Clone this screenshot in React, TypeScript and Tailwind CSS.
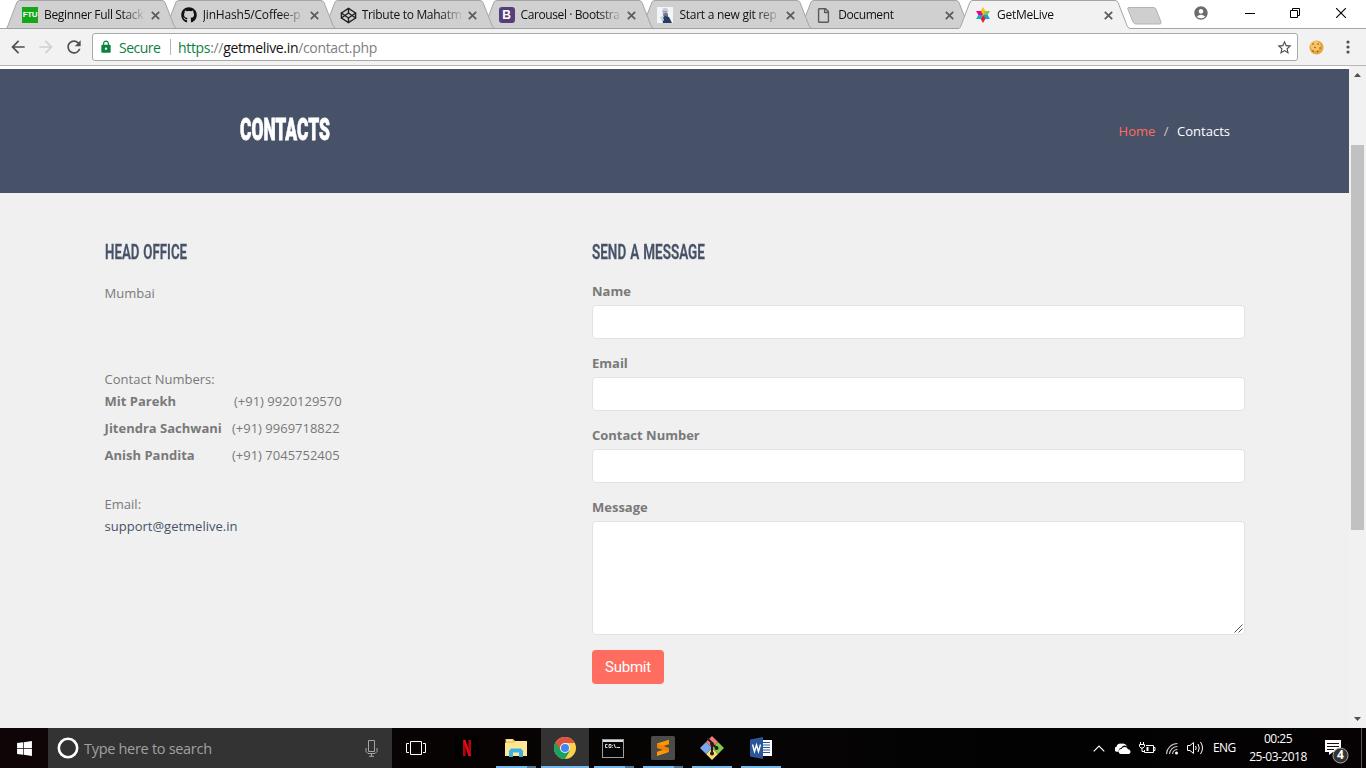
import type { ReactNode } from "react";
import { FaGithub, FaRegFile, FaWindows } from "react-icons/fa";
import { FiCodepen } from "react-icons/fi";
import { MdAccountCircle, MdArrowBack, MdArrowForward, MdLock, MdRefresh, MdStarBorder } from "react-icons/md";

function FlowerIcon() {
  const colors = ["#ffc20e", "#8cc63f", "#1b9dd9", "#ed1c24", "#17b3b5", "#ec008c"];
  return (
    <svg width="16" height="16" viewBox="0 0 16 16">
      {colors.map((c, i) => (
        <path key={c} d="M8 8 L5.5 4.3 L8 0 L10.5 4.3 Z" fill={c} transform={`rotate(${i * 60} 8 8)`} />
      ))}
    </svg>
  );
}

function PortraitIcon() {
  return (
    <svg width="16" height="16" viewBox="0 0 16 16">
      <rect width="16" height="16" fill="#f3f5f7" />
      <path d="M5 4 Q6 0 9 1 Q12 2 11 6 L10 9 H6 Z" fill="#c9cdd3" />
      <path d="M6 4h4v1.500H6z" fill="#8e98a8" />
      <path d="M6 7 Q9 5 11 7 L11 11 H7 Z" fill="#65758f" />
      <path d="M5 11 L8 9 L12 10 L15 16 H6 Z" fill="#263d63" />
      <path d="M3 10 L6 9 L7 14 L4 13 Z" fill="#c7d4e5" />
    </svg>
  );
}

function CloseX() {
  return (
    <svg width="9" height="9" viewBox="0 0 9 9" className="shrink-0">
      <path d="M.8 .8 L8.200 8.200 M8.200 .8 L.8 8.200" stroke="#5a5a5a" strokeWidth="1.700" />
    </svg>
  );
}

type TabInfo = { title: string; icon: ReactNode; text: string; z: string };

const tabs: TabInfo[] = [
  {
    title: "Beginner Full Stack",
    icon: (
      <span className="flex size-4 items-center justify-center bg-[#12a818] font-['Liberation_Sans'] text-[8px] leading-none font-bold tracking-[-0.4px] text-white">
        FTU
      </span>
    ),
    text: "tracking-[-0.35px]",
    z: "z-[6]",
  },
  { title: "JinHash5/Coffee-p", icon: <FaGithub size={16} color="#111" />, text: "tracking-[-0.2px]", z: "z-[5]" },
  { title: "Tribute to Mahatm", icon: <FiCodepen size={17} color="#222" />, text: "tracking-[-0.3px]", z: "z-[4]" },
  {
    title: "Carousel · Bootstra",
    icon: (
      <span className="flex size-4 items-center justify-center rounded-[3px] bg-[#563d7c] font-['Liberation_Sans'] text-[12px] leading-none font-bold text-white">
        B
      </span>
    ),
    text: "tracking-[-0.4px]",
    z: "z-[3]",
  },
  { title: "Start a new git rep", icon: <PortraitIcon />, text: "tracking-[-0.25px]", z: "z-[2]" },
  { title: "Document", icon: <FaRegFile size={15} color="#5a5a5a" />, text: "tracking-[-0.4px]", z: "z-[1]" },
  { title: "GetMeLive", icon: <FlowerIcon />, text: "tracking-[-0.3px]", z: "z-[10]" },
];

function Tab({ tab, active }: { tab: TabInfo; active: boolean }) {
  return (
    <div className={`relative mr-[-12.170px] h-[29px] w-[171px] shrink-0 ${tab.z}`}>
      <svg className="absolute inset-0" width="171" height="29" viewBox="0 0 171 29">
        <path
          d="M0 28.500 Q1 28 2 25.500 L11 2 Q12 .5 14 .5 H156 Q158 .5 159 2.500 L168 25.500 Q169 28 171 28.500 V29 H0 Z"
          fill={active ? "#f2f2f2" : "#d0d0d0"}
        />
        <path
          d="M0 28.500 Q1 28 2 25.500 L11 2 Q12 .5 14 .5 H156 Q158 .5 159 2.500 L168 25.500 Q169 28 171 28.500"
          fill="none"
          stroke="#a5a5a5"
        />
        {!active && <path d="M0 28.500H171" stroke="#a0a0a0" />}
      </svg>
      <div className="relative flex h-[29px] items-center pt-px pl-4">
        <span className="flex w-[22px] shrink-0 items-center">{tab.icon}</span>
        <span
          className={`w-[102px] overflow-hidden font-['Open_Sans',sans-serif] text-[12px] whitespace-nowrap text-[#111] [mask-image:linear-gradient(to_right,#000_78px,transparent_102px)] ${tab.text}`}
        >
          {tab.title}
        </span>
        <span className="ml-[4.800px]">
          <CloseX />
        </span>
      </div>
    </div>
  );
}

function TabStrip() {
  return (
    <div className="relative flex h-[29px] shrink-0 bg-white pl-[6px]">
      <div className="absolute inset-x-0 bottom-0 h-px bg-[#a5a5a5]" />
      {tabs.map((t, i) => (
        <Tab key={t.title} tab={t} active={i === 6} />
      ))}
      <svg className="relative mt-[7px] ml-[9px] shrink-0" width="35" height="18" viewBox="0 0 35 18">
        <path d="M2 .5 H26 Q28 .5 29 2 L34 15 Q34.500 17 33 17 H9 Q7 17 6 15 L.8 2 Q.5 .5 2 .5Z" fill="#cfcfcf" stroke="#b3b3b3" />
      </svg>
      <div className="ml-auto flex items-start pr-[20px]">
        <MdAccountCircle className="mt-[5px]" size={16} color="#6b6b6b" />
        <svg className="mt-2 ml-9" width="10" height="10" viewBox="0 0 10 10">
          <path d="M0 5.500H10" stroke="#000" />
        </svg>
        <svg className="mt-2 ml-[35px]" width="10" height="10" viewBox="0 0 10 10">
          <path d="M.5 2.500H7.500V9.500H.5ZM2.500 2.500V.5H9.500V7.500H7.500" fill="none" stroke="#000" />
        </svg>
        <svg className="mt-2 ml-[36px]" width="10" height="10" viewBox="0 0 10 10">
          <path d="M0 0L10 10M10 0L0 10" stroke="#000" strokeWidth="1.100" />
        </svg>
      </div>
    </div>
  );
}

function Toolbar() {
  return (
    <div className="flex h-[37px] shrink-0 items-center border-b border-[#b6b6b6] bg-[#f2f2f2] pl-2">
      <MdArrowBack size={20} color="#505050" />
      <MdArrowForward className="ml-2" size={20} color="#d0d0d0" />
      <MdRefresh className="ml-2" size={20} color="#505050" />
      <div className="ml-2 flex h-[28px] w-[1206px] items-center rounded-[3px] border border-[#a9a9a9] bg-white pl-[6px] font-['Open_Sans',sans-serif] text-[14px]">
        <MdLock size={14} color="#0b8043" />
        <span className="ml-1.5 w-[44px] tracking-[-0.5px] whitespace-nowrap text-[#0b8043]">Secure</span>
        <span className="ml-[7px] h-4 w-px bg-[#b5b5b5]" />
        <span className="ml-[7px] tracking-[-0.33px] whitespace-nowrap text-[#808080]">
          <span className="text-[#0b8043]">https</span>://<span className="text-[#111]">getmelive.in</span>/contact.php
        </span>
        <MdStarBorder className="mr-1 ml-auto" size={17} color="#505050" />
      </div>
      <svg className="ml-[11px]" width="15" height="15" viewBox="0 0 15 15">
        <circle cx="7.500" cy="7.500" r="7" fill="#e9a43f" />
        <circle cx="6.500" cy="6" r="5" fill="#f6c566" />
        {[[4, 4], [9, 4], [6, 7.500], [11, 8], [4, 11], [8.500, 11.500]].map(([x, y]) => (
          <circle key={`${x}-${y}`} cx={x} cy={y} r=".8" fill="#8a4a1c" />
        ))}
      </svg>
      <svg className="ml-[22px]" width="4" height="14" viewBox="0 0 4 14">
        <circle cx="2" cy="2" r="1.600" fill="#505050" />
        <circle cx="2" cy="7" r="1.600" fill="#505050" />
        <circle cx="2" cy="12" r="1.600" fill="#505050" />
      </svg>
    </div>
  );
}

const contacts = [
  { name: "Mit Parekh", phone: "(+91) 9920129570", col: "w-[129.400px]" },
  { name: "Jitendra Sachwani", phone: "(+91) 9969718822", col: "w-[127.400px]" },
  { name: "Anish Pandita", phone: "(+91) 7045752405", col: "w-[127.400px]" },
];

function Heading({ children, scale }: { children: ReactNode; scale: string }) {
  return (
    <h2
      className={`h-[22px] origin-left font-[Roboto,sans-serif] text-[21px] leading-[22px] font-semibold whitespace-nowrap text-[#475269] [-webkit-text-stroke:0.3px_#475269] [word-spacing:1px] ${scale}`}
    >
      {children}
    </h2>
  );
}

function ContactPage() {
  return (
    <div className="flex min-w-0 flex-1 flex-col bg-[#f0f0f0] font-['Open_Sans',sans-serif] text-[13px] leading-[22px] text-[#797979]">
      <div className="h-[3px] bg-white" />
      <header className="flex h-[124px] shrink-0 items-center justify-between bg-[#475269] pr-[119px] pl-[240px]">
        <h1 className="mb-[3px] w-[92px] origin-left scale-x-[0.570] font-[Roboto,sans-serif] text-[30.500px] leading-[34px] font-black whitespace-nowrap text-white [-webkit-text-stroke:0.8px_white]">
          CONTACTS
        </h1>
        <nav className="flex text-white">
          <span className="text-[#ff6c60]">Home</span>
          <span className="mx-[8.500px] text-[#ccc]">/</span>
          <span>Contacts</span>
        </nav>
      </header>
      <main className="flex pt-12 pl-[104.600px]">
        <section className="w-[487.400px]">
          <Heading scale="w-[125px] scale-x-[0.632]">HEAD OFFICE</Heading>
          <p className="mt-[19px]">Mumbai</p>
          <div className="mt-16">Contact Numbers:</div>
          <ul className="flex flex-col gap-[5px]">
            {contacts.map((c) => (
              <li key={c.name} className="flex">
                <strong className={`${c.col} font-bold whitespace-nowrap`}>{c.name}</strong>
                <span>{c.phone}</span>
              </li>
            ))}
          </ul>
          <div className="mt-[27px]">Email:</div>
          <a className="text-[#475269]">support@getmelive.in</a>
        </section>
        <form className="w-[653px]">
          <Heading scale="w-[170px] scale-x-[0.643]">SEND A MESSAGE</Heading>
          <div className="mt-[17px] flex flex-col gap-[13px]">
            {["Name", "Email", "Contact Number"].map((label) => (
              <label key={label} className="flex flex-col gap-[3px] font-bold">
                {label}
                <input className="h-[34px] rounded border border-[#e2e2e4] bg-white" />
              </label>
            ))}
            <label className="flex flex-col gap-[3px] font-bold">
              Message
              <span className="flex h-[114px] items-end justify-end rounded border border-[#e2e2e4] bg-white p-px">
                <svg width="9" height="9" viewBox="0 0 9 9">
                  <path d="M.5 8.500L8.500 .5M4.500 8.500L8.500 4.500" stroke="#555" strokeWidth="1" />
                </svg>
              </span>
            </label>
          </div>
          <button
            type="button"
            className="mt-[15px] block h-[34px] w-[72px] rounded bg-[#ff6c60] font-[Roboto,sans-serif] text-[15px] leading-[34px] tracking-[-0.2px] text-white"
          >
            Submit
          </button>
        </form>
      </main>
    </div>
  );
}

function Scrollbar() {
  return (
    <div className="flex w-[17px] shrink-0 flex-col items-center bg-[#f1f1f1] pt-[7px]">
      <svg width="7" height="4" viewBox="0 0 7 4">
        <path d="M0 4L3.500 0L7 4Z" fill="#505050" />
      </svg>
      <div className="mt-[68px] h-[385px] w-[13px] bg-[#c1c1c1]" />
      <svg className="mt-auto mb-[7px]" width="7" height="4" viewBox="0 0 7 4">
        <path d="M0 0L3.500 4L7 0Z" fill="#505050" />
      </svg>
    </div>
  );
}

function TaskApp({ children, bar }: { children: ReactNode; bar?: "full" | "wide" | "split" }) {
  return (
    <div className={`flex h-10 w-12 flex-col items-center ${bar === "full" ? "bg-[#333]" : ""}`}>
      <div className="flex h-[38px] items-center pt-[2px]">{children}</div>
      {bar === "full" && <div className="h-[2px] w-12 bg-[#76b9ed]" />}
      {bar === "wide" && <div className="h-[2px] w-10 bg-[#76b9ed]" />}
      {bar === "split" && (
        <div className="flex h-[2px] w-10">
          <div className="w-[31px] bg-[#76b9ed]" />
          <div className="w-[9px] bg-[#4c789b]" />
        </div>
      )}
    </div>
  );
}

function Taskbar() {
  return (
    <footer className="flex h-10 shrink-0 bg-[linear-gradient(90deg,#100506,#070303_35%,#060404_60%,#020202_75%,#060203)] font-['Open_Sans',sans-serif] text-white">
      <div className="flex w-12 items-center justify-center">
        <FaWindows size={17} />
      </div>
      <div className="flex w-[344px] items-center bg-[#333] pr-[14px] pl-[9px]">
        <svg width="22" height="22" viewBox="0 0 22 22">
          <circle cx="11" cy="11" r="9.200" fill="none" stroke="#fff" strokeWidth="2.600" />
        </svg>
        <span className="ml-[5px] pt-[2px] text-[14.500px] tracking-[-0.3px] whitespace-nowrap text-[#a0a0a0]">Type here to search</span>
        <svg className="ml-auto" width="13" height="17" viewBox="0 0 13 17">
          <path d="M3.500 .5H9.500V11.500H3.500ZM1 8V11.500L3 13.500H10L12 11.500V8M6.500 13.500V16M4 16.300H9" fill="none" stroke="#a5a5a5" />
        </svg>
      </div>
      <div className="flex w-12 items-center justify-center">
        <svg width="20" height="14" viewBox="0 0 20 14">
          <path d="M4.500 .5H15.500V13.500H4.500ZM3 2.500H.5V11.500H3M17 2.500H19.500V11.500H17" fill="none" stroke="#fff" />
        </svg>
      </div>
      <div className="ml-[3px] flex gap-px">
        <TaskApp>
          <svg width="24" height="24" viewBox="0 0 24 24">
            <rect width="24" height="24" fill="#000" />
            <path d="M8 4h2.600v16L8 20.300ZM13.400 4H16v16.300L13.400 20Z" fill="#b1060f" />
            <path d="M8 4h2.600L16 20.300L13.400 20Z" fill="#e50914" />
          </svg>
        </TaskApp>
        <TaskApp bar="split">
          <svg width="22" height="20" viewBox="0 0 22 20">
            <path d="M.5 1H8L10 3H21V18H.5Z" fill="#f5cf62" />
            <path d="M0 5H9L11 3H22V18H0Z" fill="#ffe695" />
            <path d="M2 1.700H7V2.700H2Z" fill="#fff" />
            <path d="M4 19V13L6 10.500H16L18 13V19H14V14.500H8V19Z" fill="#39b1e6" />
          </svg>
        </TaskApp>
        <TaskApp bar="full">
          <svg width="22" height="22" viewBox="0 0 22 22">
            <circle cx="11" cy="11" r="11" fill="#fcd04a" />
            <path d="M11 11L1.470 5.500A11 11 0 0 0 11 22L15.800 13.800Z" fill="#1aa260" />
            <path d="M11 6H20.800A11 11 0 0 0 1.470 5.500L6.700 13.500Z" fill="#de5246" />
            <circle cx="11" cy="11" r="5" fill="#f4f4f4" />
            <circle cx="11" cy="11" r="4" fill="#4285f4" />
          </svg>
        </TaskApp>
        <TaskApp bar="split">
          <svg className="mr-[2px]" width="22" height="19" viewBox="0 0 22 19">
            <rect x=".5" y=".5" width="21" height="18" fill="#050505" stroke="#9aa0a4" />
            <path d="M1 1H21V3H1Z" fill="#dcdfe1" />
            <path d="M5.500 5.500H3.500V8.500H5.500M7 5.500H9V8.500H7ZM10.500 6V6.800M10.500 8V8.700M12 5L13.500 9M14.500 8.500H18" fill="none" stroke="#ddd" />
          </svg>
        </TaskApp>
        <TaskApp bar="split">
          <svg width="24" height="24" viewBox="0 0 24 24">
            <rect width="24" height="24" rx="1.500" fill="#4b4b4b" />
            <path d="M6 7.500L18 3.800V8.200L6 12ZM6 15.700L18 12V16L6 20Z" fill="#ff9800" />
            <path d="M6 7.500L18 12V16L6 12Z" fill="#f08200" />
          </svg>
        </TaskApp>
        <TaskApp bar="wide">
          <svg width="24" height="24" viewBox="0 0 24 24">
            <path d="M12 0L18 6L12 12L6 6Z" fill="#f27b78" />
            <path d="M18 6L24 12L18 18L12 12Z" fill="#82c950" />
            <path d="M12 12L18 18L12 24L6 18Z" fill="#f8dc75" />
            <path d="M6 6L12 12L6 18L0 12Z" fill="#79a8ee" />
            <path d="M7 2L12 7V19M12 8L17 12" fill="none" stroke="#2a1c18" strokeWidth="2" />
            <circle cx="12" cy="8" r="2" fill="#2a1c18" />
            <circle cx="12" cy="17.500" r="2" fill="#2a1c18" />
            <circle cx="16.500" cy="12" r="2" fill="#2a1c18" />
          </svg>
        </TaskApp>
        <TaskApp bar="wide">
          <svg width="22" height="22" viewBox="0 0 22 22">
            <rect x="12" y="3" width="10" height="16" fill="#fff" />
            <path d="M13 5.500H20M13 8H20M13 10.500H20M13 13H20M13 15.500H20" stroke="#2b579a" />
            <path d="M0 2.500L13 0V22L0 19.500Z" fill="#2b579a" />
            <path d="M2.500 7.500L4.500 14.500L6.500 8L8.500 14.500L10.500 7.500" fill="none" stroke="#fff" strokeWidth="1.400" />
          </svg>
        </TaskApp>
      </div>
      <div className="ml-auto flex items-center">
        <svg width="12" height="7" viewBox="0 0 12 7">
          <path d="M.7 6.300L6 1L11.300 6.300" fill="none" stroke="#fff" strokeWidth="1.200" />
        </svg>
        <svg className="ml-[10px]" width="16" height="11" viewBox="0 0 16 11">
          <path d="M1.800 8.800A2.600 2.600 0 0 1 1.500 3.700A3.800 3.800 0 0 1 6.500 .8A4.200 4.200 0 0 1 12 3.400A4.200 4.200 0 0 0 6.300 4.800A3.200 3.200 0 0 0 3.900 8.800Z" fill="#fff" />
          <path d="M6 11A2.500 2.500 0 0 1 6.500 6A3.500 3.500 0 0 1 13 6.200A2.500 2.500 0 0 1 14 11Z" fill="#fff" />
        </svg>
        <svg className="ml-[8px]" width="17" height="12" viewBox="0 0 17 12">
          <path d="M7 3.500H14.500V10.500H5.500V8M14.500 5.500H16V8.500H14.500M1.500 0V2M4.500 0V2M.5 2.500H5.500V4.500L4 6H2L.5 4.500ZM3 6V9.500H5" fill="none" stroke="#fff" />
          <path d="M7.500 5H9.500V9H7.500Z" fill="#fff" />
        </svg>
        <svg className="ml-[10px]" width="13" height="13" viewBox="0 0 13 13">
          <path d="M.5 12A11 11 0 0 1 11.500 1.500M3.500 12A8 8 0 0 1 11.500 4.500M6.500 12A5 5 0 0 1 11.500 7.500" fill="none" stroke="#ccc" strokeWidth="1.100" />
          <circle cx="10.500" cy="11" r="1.500" fill="#fff" />
        </svg>
        <svg className="ml-[8px]" width="17" height="14" viewBox="0 0 17 14">
          <path d="M.5 4.500H3L6.500 1.500V12.500L3 9.500H.5ZM8.500 5Q10 7 8.500 9M11 3Q13.500 7 11 11M13.500 1Q17.500 7 13.500 13" fill="none" stroke="#fff" />
        </svg>
        <span className="ml-[9px] w-[24px] text-[12px] tracking-[-0.6px]">ENG</span>
        <div className="ml-[12px] flex w-[58px] flex-col items-center pb-px text-[12px] leading-[18px] tracking-[-0.5px] whitespace-nowrap">
          <span>00:25</span>
          <span>25-03-2018</span>
        </div>
        <div className="relative ml-[18px] h-[24px] w-[24px]">
          <svg width="24" height="28" viewBox="0 0 24 28">
            <path d="M0 4H16V16H8L4 19V16H0Z" fill="#fff" />
            <path d="M2 7.500H14M2 10.500H14M2 13.500H9" stroke="#111" />
            <circle cx="15.500" cy="19.500" r="7.500" fill="#333" stroke="#aaa" />
          </svg>
          <span className="absolute top-[11px] left-[7.500px] w-4 text-center text-[12px] leading-4 font-bold">4</span>
        </div>
        <div className="ml-[12px] h-10 w-px bg-[#555]" />
        <div className="w-[4px]" />
      </div>
    </footer>
  );
}

export default function App() {
  return (
    <div className="flex h-[768px] w-[1366px] flex-col overflow-hidden bg-white">
      <TabStrip />
      <Toolbar />
      <div className="flex min-h-0 flex-1">
        <ContactPage />
        <Scrollbar />
      </div>
      <Taskbar />
    </div>
  );
}
